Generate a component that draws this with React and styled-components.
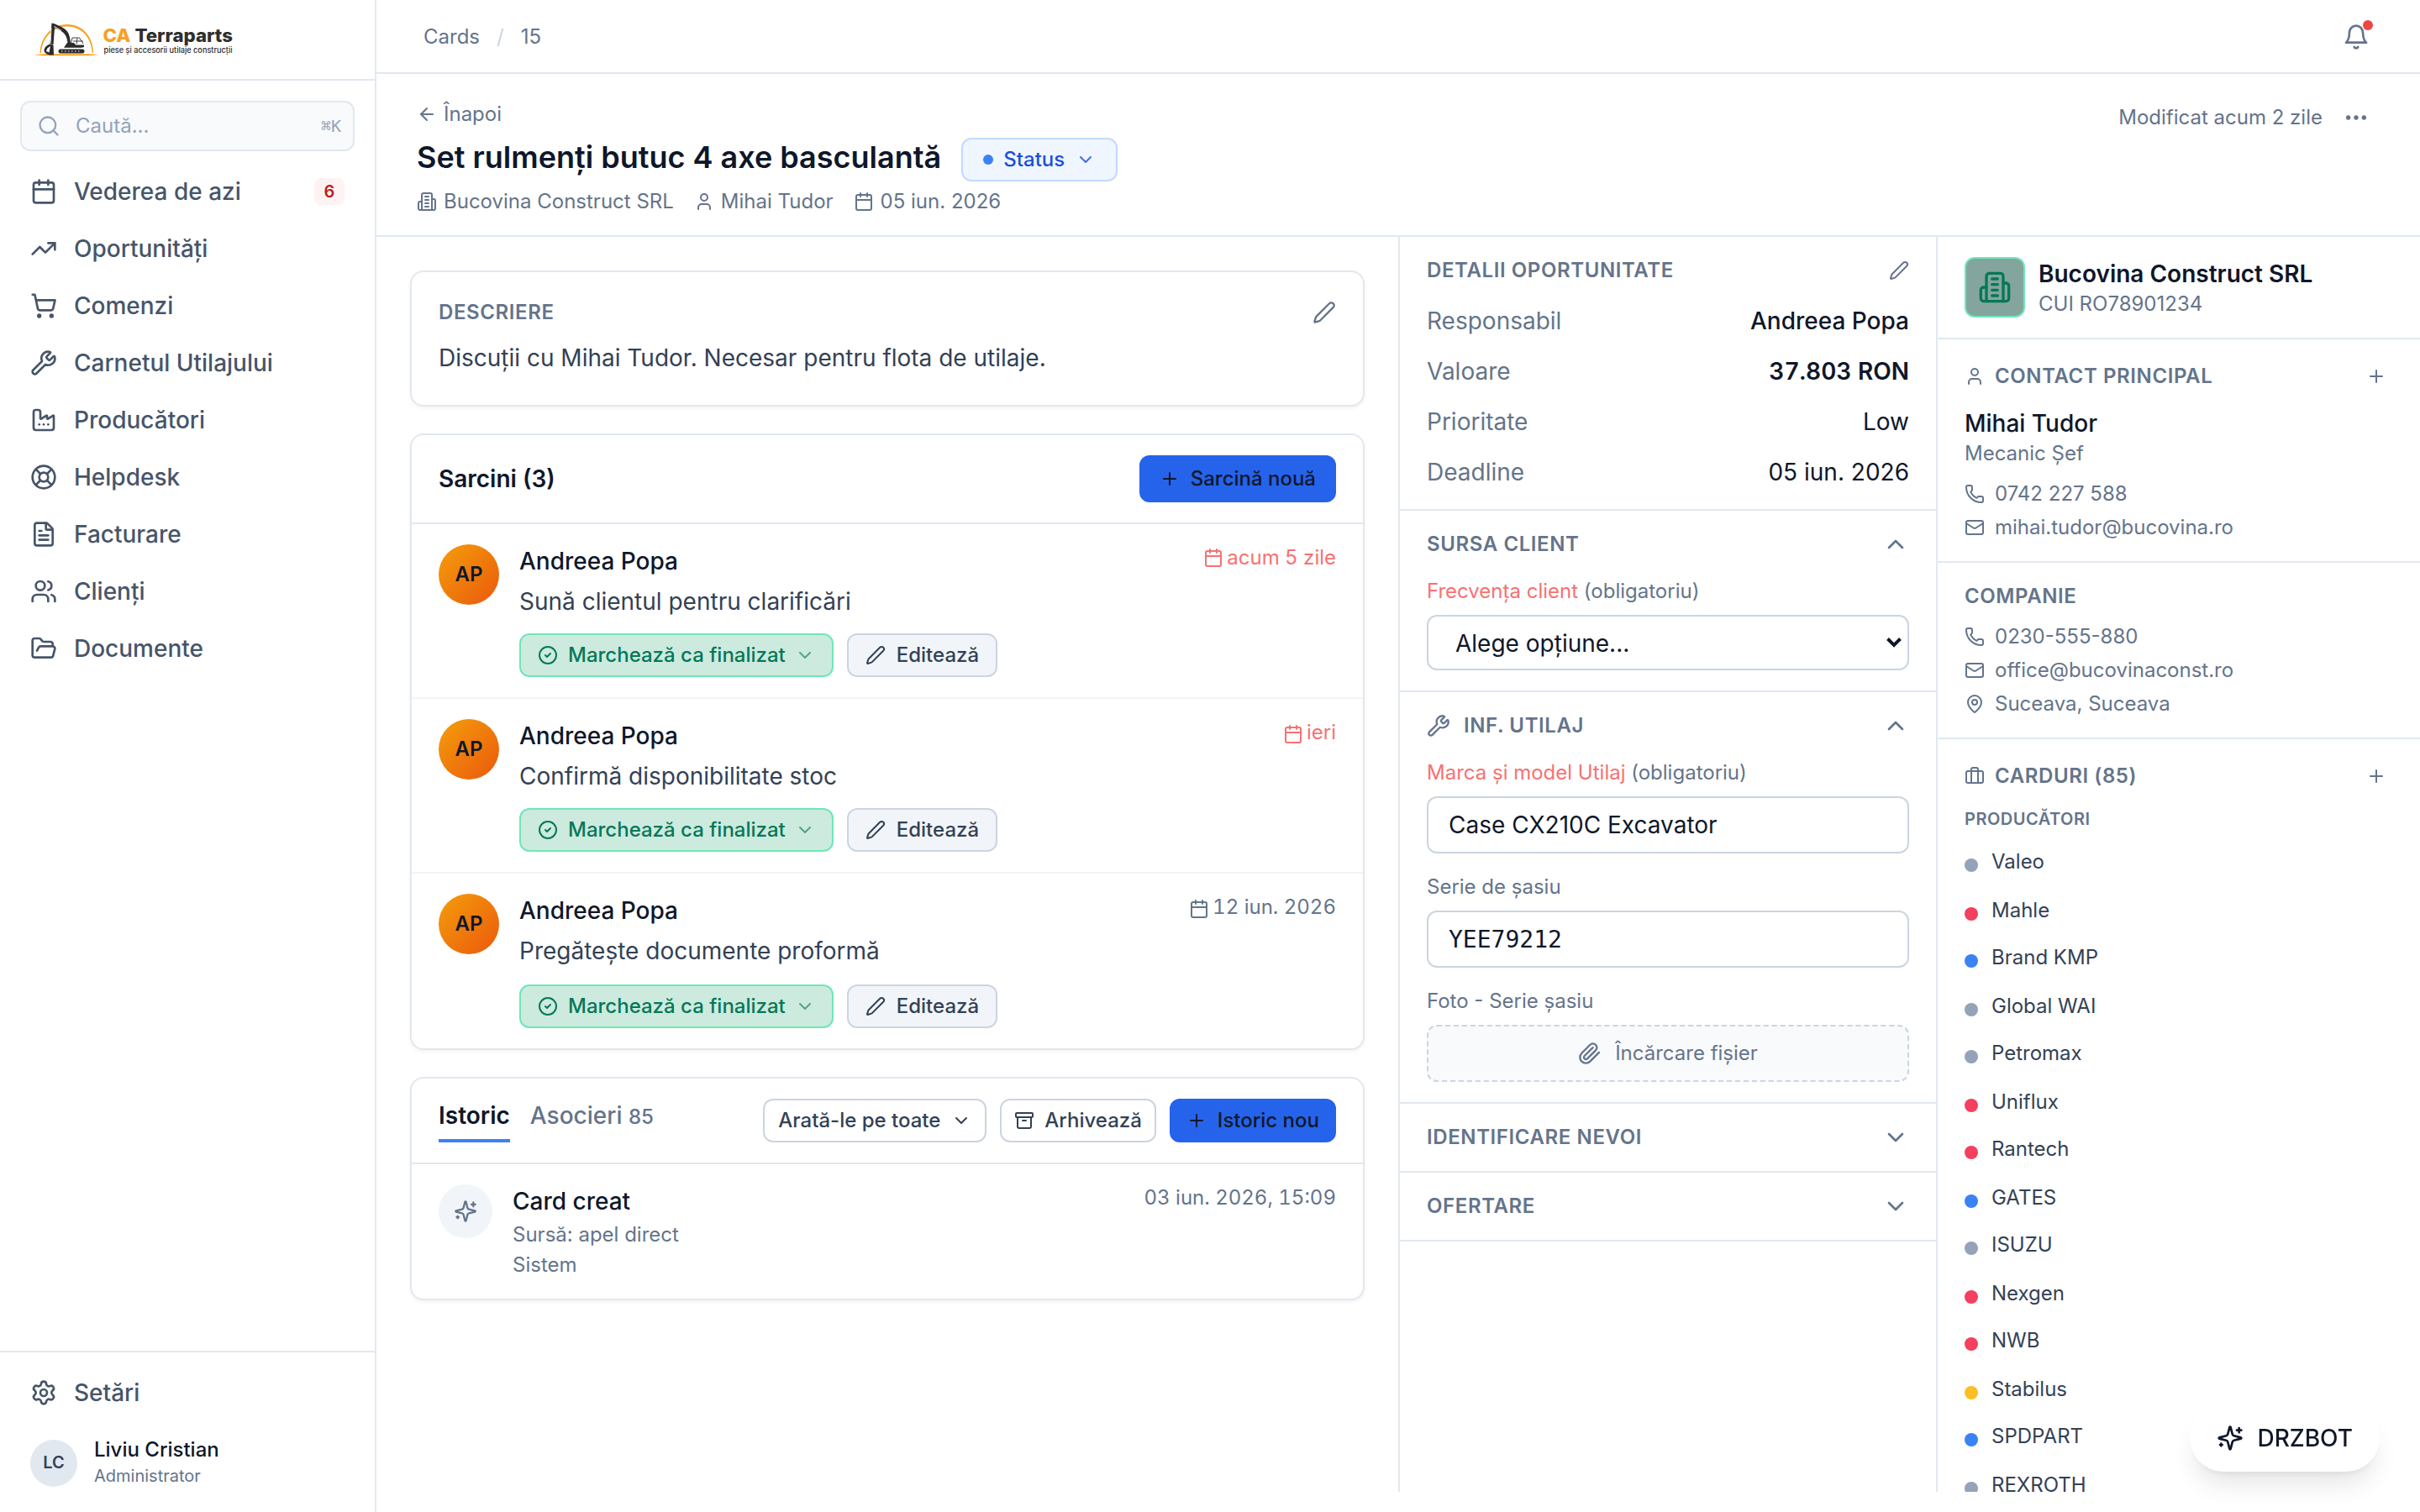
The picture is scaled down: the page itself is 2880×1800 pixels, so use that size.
import React from 'react'
import styled, { createGlobalStyle, css } from 'styled-components'
import {
  Archive,
  ArrowLeft,
  Briefcase,
  Calendar,
  ChevronDown,
  ChevronUp,
  CircleCheck,
  Ellipsis,
  Factory,
  FileText,
  FolderOpen,
  LifeBuoy,
  Mail,
  MapPin,
  Pen,
  Phone,
  Plus,
  Search,
  Settings,
  ShoppingCart,
  TrendingUp,
  User,
  Users,
  Wrench,
} from 'lucide-react'

const colors = {
  ink: '#0f172a',
  text: '#334155',
  nav: '#475569',
  muted: '#64748b',
  faint: '#94a3b8',
  line: '#e2e8f0',
  lineSoft: '#f1f5f9',
  lineStrong: '#cbd5e1',
  blue: '#2563eb',
  red: '#f87171',
  green: '#047857',
}

const GlobalStyle = createGlobalStyle`
  * {
    box-sizing: border-box;
  }
  body {
    margin: 0;
    background: #fff;
    color: ${colors.ink};
    font-family: Inter, 'Liberation Sans', sans-serif;
    font-size: 24px;
    line-height: 32px;
  }
  h1, h2, p {
    margin: 0;
  }
  button, input {
    font: inherit;
    color: inherit;
  }
  svg {
    display: block;
    flex-shrink: 0;
  }
`

/* icons that lucide draws differently in its current version */

const Glyph = ({ size = 24, children }) => (
  <svg
    width={size}
    height={size}
    viewBox="0 0 24 24"
    fill="none"
    stroke="currentColor"
    strokeWidth="2"
    strokeLinecap="round"
    strokeLinejoin="round"
  >
    {children}
  </svg>
)

const BellIcon = (props) => (
  <Glyph {...props}>
    <path d="M6 8a6 6 0 0 1 12 0c0 7 3 9 3 9H3s3-2 3-9" />
    <path d="M10.3 21a1.94 1.94 0 0 0 3.4 0" />
  </Glyph>
)

const BuildingIcon = (props) => (
  <Glyph {...props}>
    <path d="M6 22V4a2 2 0 0 1 2-2h8a2 2 0 0 1 2 2v18Z" />
    <path d="M6 12H4a2 2 0 0 0-2 2v6a2 2 0 0 0 2 2h2" />
    <path d="M18 9h2a2 2 0 0 1 2 2v9a2 2 0 0 1-2 2h-2" />
    <path d="M10 6h4M10 10h4M10 14h4M10 18h4" />
  </Glyph>
)

const SparklesIcon = (props) => (
  <Glyph {...props}>
    <path d="M9.937 15.5A2 2 0 0 0 8.5 14.063l-6.135-1.582a.5.5 0 0 1 0-.962L8.5 9.936A2 2 0 0 0 9.937 8.5l1.582-6.135a.5.5 0 0 1 .963 0L14.063 8.5A2 2 0 0 0 15.5 9.937l6.135 1.581a.5.5 0 0 1 0 .964L15.5 14.063a2 2 0 0 0-1.437 1.437l-1.582 6.135a.5.5 0 0 1-.963 0z" />
    <path d="M20 3v4M22 5h-4M4 17v2M5 18H3" />
  </Glyph>
)

const PaperclipIcon = (props) => (
  <Glyph {...props}>
    <path d="m21.44 11.05-9.19 9.19a6 6 0 0 1-8.49-8.49l8.57-8.57A4 4 0 1 1 18 8.84l-8.59 8.57a2 2 0 0 1-2.83-2.83l8.49-8.48" />
  </Glyph>
)

const Logo = () => (
  <svg width="260" height="56" viewBox="40 19 260 56">
    <path
      d="M47.5 63C48 45 61 29 80 29c18 0 31 14.500 31 34h-1.400C109 45 97 31.500 80 31.500 63 31.500 50 45 49 63z"
      fill="#f7a023"
    />
    <path d="M40 65.300 52 64.200h54l12 .9-12 1.100H52z" fill="#f7a023" />
    <path
      d="m61.500 27.500 2.500.5c7 3 13 5 16.500 10 2 3 3 8 3.500 13h-3.500c-.5-5-2-9-4.500-11.500-3-3-7-4.500-11-6.500l-1.500 20-4-1z"
      fill="#2b2b2b"
    />
    <path d="m64.500 31.500 8.500 5" stroke="#fff" strokeWidth="1" />
    <path d="M61 33.500 60.300 51" stroke="#fff" strokeWidth=".8" />
    <path
      d="M59.500 52.500c-4 1-7.500 5-7 8.500 1 2 3 3.500 6.500 4.500h5l-.5-12z"
      fill="#2b2b2b"
    />
    <path d="M55 61c.5-3 2.500-5 5-6l-1.500 7.500z" fill="#fff" />
    <path
      d="m84.500 52 1.500-7h8.500l4.500 7M92 45.500l-1 7M87 49h12"
      fill="none"
      stroke="#2b2b2b"
      strokeWidth=".9"
    />
    <path d="M80 51h8l2 2.500h10V56l-3 .8H76l2-3z" fill="#2b2b2b" />
    <rect x="69.500" y="58.500" width="31" height="5" rx="2.500" fill="#2b2b2b" />
    <path
      d="M73 61h24"
      stroke="#fff"
      strokeWidth="1.200"
      strokeDasharray="1.500 2.500"
    />
    <text
      x="122.500"
      y="49.500"
      fontFamily="Inter, sans-serif"
      fontSize="22"
      fontWeight="800"
      textLength="154.500"
      lengthAdjust="spacingAndGlyphs"
      fill="#2f2f2f"
    >
      <tspan fill="#f7a023">CA</tspan> Terraparts
    </text>
    <text
      x="123.500"
      y="63.300"
      fontFamily="Inter, sans-serif"
      fontSize="9.500"
      fontWeight="500"
      textLength="153"
      lengthAdjust="spacingAndGlyphs"
      fill="#2f2f2f"
    >
      piese și accesorii utilaje construcții
    </text>
  </svg>
)

/* shell */

const Shell = styled.div`
  display: grid;
  grid-template-columns: 448px 1fr;
  height: 1800px;
  overflow: hidden;
`

const Sidebar = styled.aside`
  display: flex;
  flex-direction: column;
  border-right: 2px solid ${colors.line};
`

const Brand = styled.div`
  height: 96px;
  padding: 19px 40px 0;
  border-bottom: 2px solid ${colors.line};
`

const SearchBox = styled.div`
  display: flex;
  align-items: center;
  gap: 18px;
  height: 60px;
  margin: 24px 24px 16px;
  padding: 0 14px 0 18px;
  border: 2px solid ${colors.line};
  border-radius: 12px;
  background: #f8fafc;
  color: ${colors.faint};
`

const Shortcut = styled.kbd`
  margin-left: auto;
  font-family: 'DejaVu Sans Mono', monospace;
  font-size: 20px;
`

const Nav = styled.nav`
  display: flex;
  flex-direction: column;
  gap: 4px;
  padding: 0 24px;
`

const NavItem = styled.a`
  display: flex;
  align-items: center;
  gap: 20px;
  height: 64px;
  padding: 0 12px;
  font-size: 28px;
  font-weight: 500;
  color: ${colors.nav};
`

const NavBadge = styled.span`
  display: flex;
  align-items: center;
  justify-content: center;
  width: 36px;
  height: 32px;
  margin-left: auto;
  border-radius: 8px;
  background: #fef2f2;
  color: #b91c1c;
  font-size: 20px;
  font-weight: 600;
`

const SidebarFooter = styled.div`
  height: 192px;
  margin-top: auto;
  padding: 16px 24px 0;
  border-top: 2px solid ${colors.line};
`

const UserRow = styled.div`
  display: flex;
  align-items: center;
  gap: 20px;
  margin-top: 20px;
  padding: 0 12px;
`

const UserAvatar = styled.div`
  display: flex;
  align-items: center;
  justify-content: center;
  width: 56px;
  height: 56px;
  padding-bottom: 2px;
  border-radius: 50%;
  background: ${colors.line};
  color: ${colors.text};
  font-size: 20px;
  font-weight: 600;
`

const UserName = styled.div`
  font-weight: 500;
`

const UserRole = styled.div`
  font-size: 20px;
  line-height: 31px;
  color: ${colors.muted};
`

const Page = styled.div`
  display: flex;
  flex-direction: column;
  min-width: 0;
  min-height: 0;
`

const TopBar = styled.div`
  display: flex;
  align-items: center;
  justify-content: space-between;
  height: 88px;
  padding: 2px 60px 0 56px;
  border-bottom: 2px solid ${colors.line};
  color: ${colors.muted};
`

const Crumbs = styled.div`
  display: flex;
  gap: 20px;
`

const CrumbSlash = styled.span`
  color: ${colors.lineStrong};
`

const BellButton = styled.div`
  position: relative;

  &::after {
    content: '';
    position: absolute;
    top: -4px;
    right: -4px;
    width: 12px;
    height: 12px;
    border-radius: 50%;
    background: #ef4444;
  }
`

const PageHeader = styled.header`
  display: flex;
  justify-content: space-between;
  height: 194px;
  padding: 32px 60px 0 48px;
  border-bottom: 2px solid ${colors.line};
  color: ${colors.muted};
`

const BackLink = styled.div`
  display: flex;
  align-items: center;
  gap: 8px;
`

const TitleRow = styled.div`
  display: flex;
  align-items: center;
  gap: 24px;
  margin-top: 12px;
`

const Title = styled.h1`
  padding-bottom: 6px;
  font-size: 36px;
  line-height: 44px;
  font-weight: 600;
  color: ${colors.ink};
`

const MetaRow = styled.div`
  display: flex;
  gap: 24px;
  margin-top: 8px;
`

const MetaItem = styled.span`
  display: flex;
  align-items: center;
  gap: 8px;
`

const Modified = styled.div`
  display: flex;
  align-items: center;
  gap: 24px;
  height: 40px;
`

/* buttons */

const variants = {
  primary: css`
    border-color: ${colors.blue};
    background: ${colors.blue};
    color: ${colors.ink};
  `,
  status: css`
    border-color: #bfdbfe;
    background: #eff6ff;
    color: #1d4ed8;
  `,
  success: css`
    border-color: #6ee7b7;
    background: #cdeadf;
    color: ${colors.green};
  `,
  soft: css`
    border-color: ${colors.lineStrong};
    background: ${colors.lineSoft};
    color: ${colors.text};
  `,
  outline: css`
    border-color: ${colors.lineStrong};
    background: #fff;
    color: ${colors.text};
  `,
}

const Button = styled.button`
  display: flex;
  align-items: center;
  gap: ${({ $gap }) => $gap || 12}px;
  height: ${({ $height }) => $height || 52}px;
  padding: 0 ${({ $pad }) => $pad || 20}px;
  border: 2px solid;
  border-radius: 12px;
  font-weight: 500;
  white-space: nowrap;
  ${({ $variant }) => variants[$variant]}
`

const StatusDot = styled.span`
  width: 12px;
  height: 12px;
  border-radius: 50%;
  background: #3b82f6;
`

const Dim = styled.span`
  margin-left: ${({ $shift }) => $shift}px;
  opacity: ${({ $to }) => $to};
`

/* main column */

const Columns = styled.div`
  display: grid;
  grid-template-columns: 1216px 640px 1fr;
  flex: 1;
  min-height: 0;
  margin-bottom: 24px;
`

const Feed = styled.main`
  display: flex;
  flex-direction: column;
  gap: 32px;
  padding: 40px;
`

const Card = styled.section`
  border: 2px solid ${colors.line};
  border-radius: 16px;
  background: #fff;
  box-shadow: 0 2px 4px rgba(0, 0, 0, 0.05);
`

const DescriptionCard = styled(Card)`
  height: 162px;
  padding: 32px;
`

const SectionHead = styled.div`
  display: flex;
  align-items: center;
  height: ${({ $height }) => $height || 32}px;
  gap: ${({ $gap }) => $gap || 12}px;
  color: ${colors.muted};

  > svg:last-child:not(:first-child) {
    margin-left: auto;
  }
`

const SectionTitle = styled.h2`
  font-size: ${({ $small }) => ($small ? 20 : 24)}px;
  line-height: ${({ $small }) => ($small ? 28 : 32)}px;
  font-weight: 600;
  letter-spacing: 0.025em;
  text-transform: uppercase;
  color: ${colors.muted};
`

const Description = styled.p`
  margin-top: 18px;
  font-size: 28px;
  line-height: 40px;
  color: ${colors.text};
`

const CardHeader = styled.div`
  display: flex;
  align-items: center;
  justify-content: space-between;
  height: ${({ $height }) => $height}px;
  padding: 0 32px;
  border-bottom: 2px solid ${colors.line};
`

const CardTitle = styled.h2`
  font-size: 28px;
  font-weight: 600;
`

const TaskAvatar = styled.div`
  display: flex;
  align-items: center;
  justify-content: center;
  width: 72px;
  height: 72px;
  border-radius: 50%;
  background: linear-gradient(135deg, #f59e0b, #ea580c);
  font-size: 24px;
  font-weight: 600;
`

const TaskBody = styled.div`
  flex: 1;
`

const TaskOwner = styled.div`
  font-size: 28px;
  line-height: 40px;
  font-weight: 500;
`

const TaskText = styled.div`
  margin-top: 8px;
  font-size: 28px;
  line-height: 40px;
  color: ${colors.text};
`

const ButtonRow = styled.div`
  display: flex;
  gap: 16px;
`

const TaskActions = styled(ButtonRow)`
  margin-top: 18px;
`

const TaskRow = styled.div`
  display: flex;
  align-items: flex-start;
  gap: 24px;
  height: 208px;
  padding: 24px 32px 0;

  & + & {
    border-top: 2px solid ${colors.lineSoft};
    margin-top: -2px;
    height: 210px;
  }

  &:last-child {
    height: 210px;

    ${TaskActions} {
      margin-top: 20px;
    }
  }
`

const DueDate = styled.div`
  display: flex;
  align-items: flex-start;
  gap: 4px;
  font-variant-numeric: tabular-nums;
  color: ${({ $late }) => ($late ? colors.red : colors.muted)};

  svg {
    margin-top: ${({ $drop }) => 4 + $drop}px;
  }
`

const Tabs = styled.div`
  display: flex;
  gap: 24px;
  height: 52px;
`

const Tab = styled.div`
  height: 52px;
  padding-top: 4px;
  border-bottom: 4px solid ${({ $active }) => ($active ? '#3b82f6' : 'transparent')};
  font-size: 28px;
  font-weight: ${({ $active }) => ($active ? 600 : 500)};
  color: ${({ $active }) => ($active ? colors.ink : colors.muted)};
`

const TabCount = styled.span`
  font-size: 24px;
`

const Entry = styled.div`
  display: flex;
  align-items: flex-start;
  gap: 24px;
  height: 160px;
  padding: 24px 32px 0;
  color: ${colors.muted};
`

const EntryIcon = styled.div`
  display: flex;
  align-items: center;
  justify-content: center;
  width: 64px;
  height: 64px;
  border-radius: 50%;
  background: ${colors.lineSoft};
`

const EntryBody = styled.div`
  flex: 1;
  line-height: 36px;
`

const EntryTitle = styled.div`
  margin-bottom: 2px;
  font-size: 28px;
  line-height: 40px;
  font-weight: 500;
  color: ${colors.ink};
`

const EntryDate = styled.span`
  font-variant-numeric: tabular-nums;
`

/* details column */

const Panel = styled.aside`
  min-height: 0;
  overflow: hidden;
  border-left: 2px solid ${colors.line};
`

const PanelSection = styled.section`
  padding: ${({ $pad }) => $pad};
  border-bottom: 2px solid ${colors.line};
`

const DetailList = styled.div`
  margin-top: 14px;
`

const DetailRow = styled.div`
  display: flex;
  align-items: center;
  justify-content: space-between;
  height: 60px;
  font-size: 28px;
`

const DetailLabel = styled.span`
  color: ${colors.muted};
`

const DetailValue = styled.span`
  font-weight: ${({ $weight }) => $weight || 400};
  font-variant-numeric: ${({ $tabular }) => ($tabular ? 'tabular-nums' : 'normal')};
`

const FieldLabel = styled.div`
  margin-bottom: 12px;
  color: ${colors.muted};

  * + & {
    margin-top: 24px;
  }

  ${SectionHead} + & {
    margin-top: 0;
  }
`

const Required = styled.span`
  color: ${colors.red};
`

const SelectField = styled.div`
  display: flex;
  align-items: center;
  justify-content: space-between;
  height: 66px;
  padding: 2px 6px 0 32px;
  border: 2px solid ${colors.lineStrong};
  border-radius: 12px;
  font-size: 28px;

  svg {
    margin-bottom: 3px;
  }
`

const Input = styled.input`
  display: block;
  width: 100%;
  height: 68px;
  padding: 0 24px;
  border: 2px solid ${colors.lineStrong};
  border-radius: 12px;
  outline: none;
  font-size: 28px;
  ${({ $mono }) => $mono && "font-family: 'DejaVu Sans Mono', monospace;"}
`

const Upload = styled.div`
  display: flex;
  align-items: center;
  justify-content: center;
  gap: 16px;
  height: 68px;
  border: 2px dashed ${colors.lineStrong};
  border-radius: 12px;
  background: #f8fafc;
  color: ${colors.muted};
`

/* company column */

const CompanyHead = styled.div`
  display: flex;
  gap: 16px;
`

const CompanyLogo = styled.div`
  display: flex;
  align-items: center;
  justify-content: center;
  width: 72px;
  height: 72px;
  border: 2px solid #6ee7b7;
  border-radius: 12px;
  background: #84a59d;
  color: ${colors.green};
`

const CompanyName = styled.div`
  font-size: 28px;
  line-height: 40px;
  font-weight: 600;
`

const Muted = styled.div`
  color: ${colors.muted};
`

const PersonName = styled.div`
  margin-top: 12px;
  font-size: 28px;
  line-height: 40px;
  font-weight: 500;
`

const ContactList = styled.div`
  margin-top: ${({ $top }) => $top}px;
`

const ContactLine = styled.div`
  display: flex;
  align-items: center;
  gap: 12px;
  height: 40px;
  color: ${colors.muted};
`

const CardsSection = styled.section`
  padding: 20px 40px 0 32px;
`

const CardsSubhead = styled.div`
  margin: 13px 0 21px;
`

const MakerRow = styled.div`
  display: flex;
  align-items: flex-start;
  gap: 16px;
  height: 58px;
  color: ${colors.text};

  &:nth-child(even) {
    height: 56px;
  }
`

const MakerDot = styled.span`
  width: 16px;
  height: 16px;
  margin-top: 12px;
  border-radius: 50%;
  background: ${({ $color }) => $color};
`

const BotButton = styled.button`
  position: fixed;
  right: 48px;
  bottom: 48px;
  display: flex;
  align-items: center;
  gap: 16px;
  height: 80px;
  padding: 0 32px;
  border: 0;
  border-radius: 40px;
  background: #fff;
  box-shadow: 0 20px 30px -6px rgba(0, 0, 0, 0.1),
    0 8px 12px -8px rgba(0, 0, 0, 0.1);
  font-size: 28px;
  font-weight: 500;
`

const navItems = [
  { label: 'Vederea de azi', icon: Calendar, badge: 6 },
  { label: 'Oportunități', icon: TrendingUp },
  { label: 'Comenzi', icon: ShoppingCart },
  { label: 'Carnetul Utilajului', icon: Wrench },
  { label: 'Producători', icon: Factory },
  { label: 'Helpdesk', icon: LifeBuoy },
  { label: 'Facturare', icon: FileText },
  { label: 'Clienți', icon: Users },
  { label: 'Documente', icon: FolderOpen },
]

const tasks = [
  { text: 'Sună clientul pentru clarificări', due: 'acum 5 zile', late: true, drop: 0 },
  { text: 'Confirmă disponibilitate stoc', due: 'ieri', late: true, drop: 2 },
  { text: 'Pregătește documente proformă', due: '12 iun. 2026', late: false, drop: 2 },
]

const details = [
  { label: 'Responsabil', value: 'Andreea Popa', weight: 500 },
  { label: 'Valoare', value: '37.803 RON', weight: 600, tabular: true },
  { label: 'Prioritate', value: 'Low' },
  { label: 'Deadline', value: '05 iun. 2026' },
]

const gray = '#94a3b8'
const rose = '#f43f5e'
const sky = '#3b82f6'
const amber = '#fbbf24'

const makers = [
  ['Valeo', gray],
  ['Mahle', rose],
  ['Brand KMP', sky],
  ['Global WAI', gray],
  ['Petromax', gray],
  ['Uniflux', rose],
  ['Rantech', rose],
  ['GATES', sky],
  ['ISUZU', gray],
  ['Nexgen', rose],
  ['NWB', rose],
  ['Stabilus', amber],
  ['SPDPART', sky],
  ['REXROTH', gray],
]

function SidebarNav() {
  return (
    <Sidebar>
      <Brand>
        <Logo />
      </Brand>
      <SearchBox>
        <Search size={28} />
        <span>Caută...</span>
        <Shortcut>⌘K</Shortcut>
      </SearchBox>
      <Nav>
        {navItems.map(({ label, icon: Icon, badge }) => (
          <NavItem key={label}>
            <Icon size={32} />
            {label}
            {badge && <NavBadge>{badge}</NavBadge>}
          </NavItem>
        ))}
      </Nav>
      <SidebarFooter>
        <NavItem>
          <Settings size={32} />
          Setări
        </NavItem>
        <UserRow>
          <UserAvatar>LC</UserAvatar>
          <div>
            <UserName>Liviu Cristian</UserName>
            <UserRole>Administrator</UserRole>
          </div>
        </UserRow>
      </SidebarFooter>
    </Sidebar>
  )
}

function Task({ text, due, late, drop }) {
  return (
    <TaskRow>
      <TaskAvatar>AP</TaskAvatar>
      <TaskBody>
        <TaskOwner>Andreea Popa</TaskOwner>
        <TaskText>{text}</TaskText>
        <TaskActions>
          <Button $variant="success">
            <CircleCheck size={24} />
            Marchează ca finalizat
            <Dim $to={0.6} $shift={-1}>
              <ChevronDown size={24} />
            </Dim>
          </Button>
          <Button $variant="soft" $gap={13}>
            <Pen size={24} />
            Editează
          </Button>
        </TaskActions>
      </TaskBody>
      <DueDate $late={late} $drop={drop}>
        <Calendar size={24} />
        {due}
      </DueDate>
    </TaskRow>
  )
}

function DetailsPanel() {
  return (
    <Panel>
      <PanelSection $pad="24px 32px 14px">
        <SectionHead>
          <SectionTitle>Detalii oportunitate</SectionTitle>
          <Pen size={24} />
        </SectionHead>
        <DetailList>
          {details.map(({ label, value, weight, tabular }) => (
            <DetailRow key={label}>
              <DetailLabel>{label}</DetailLabel>
              <DetailValue $weight={weight} $tabular={tabular}>
                {value}
              </DetailValue>
            </DetailRow>
          ))}
        </DetailList>
      </PanelSection>
      <PanelSection $pad="0 32px 24px">
        <SectionHead $height={80}>
          <SectionTitle>Sursa client</SectionTitle>
          <ChevronUp size={32} />
        </SectionHead>
        <FieldLabel>
          <Required>Frecvența client</Required> (obligatoriu)
        </FieldLabel>
        <SelectField>
          Alege opțiune...
          <svg width="20" height="14" viewBox="0 0 20 14" fill="none">
            <path d="m2.500 2.500 7.500 7.500 7.500-7.500" stroke={colors.ink} strokeWidth="4" />
          </svg>
        </SelectField>
      </PanelSection>
      <PanelSection $pad="0 32px 24px">
        <SectionHead $height={80} $gap={16}>
          <Wrench size={28} />
          <SectionTitle>Inf. utilaj</SectionTitle>
          <ChevronUp size={32} />
        </SectionHead>
        <FieldLabel>
          <Required>Marca și model Utilaj</Required> (obligatoriu)
        </FieldLabel>
        <Input defaultValue="Case CX210C Excavator" />
        <FieldLabel>Serie de șasiu</FieldLabel>
        <Input $mono defaultValue="YEE79212" />
        <FieldLabel>Foto - Serie șasiu</FieldLabel>
        <Upload>
          <PaperclipIcon size={28} />
          Încărcare fișier
        </Upload>
      </PanelSection>
      <PanelSection $pad="0 32px">
        <SectionHead $height={80}>
          <SectionTitle>Identificare nevoi</SectionTitle>
          <ChevronDown size={32} />
        </SectionHead>
      </PanelSection>
      <PanelSection $pad="0 32px">
        <SectionHead $height={80}>
          <SectionTitle>Ofertare</SectionTitle>
          <ChevronDown size={32} />
        </SectionHead>
      </PanelSection>
    </Panel>
  )
}

function CompanyPanel() {
  return (
    <Panel>
      <PanelSection $pad="24px 32px">
        <CompanyHead>
          <CompanyLogo>
            <BuildingIcon size={40} />
          </CompanyLogo>
          <div>
            <CompanyName>Bucovina Construct SRL</CompanyName>
            <Muted>CUI RO78901234</Muted>
          </div>
        </CompanyHead>
      </PanelSection>
      <PanelSection $pad="20px 40px 20px 32px">
        <SectionHead $height={48}>
          <User size={24} />
          <SectionTitle>Contact principal</SectionTitle>
          <Plus size={24} />
        </SectionHead>
        <PersonName>Mihai Tudor</PersonName>
        <Muted>Mecanic Șef</Muted>
        <ContactList $top={12}>
          <ContactLine>
            <Phone size={24} />
            0742 227 588
          </ContactLine>
          <ContactLine>
            <Mail size={24} />
            mihai.tudor@bucovina.ro
          </ContactLine>
        </ContactList>
      </PanelSection>
      <PanelSection $pad="20px 40px 20px 32px">
        <SectionHead $height={40}>
          <SectionTitle>Companie</SectionTitle>
        </SectionHead>
        <ContactList $top={8}>
          <ContactLine>
            <Phone size={24} />
            0230-555-880
          </ContactLine>
          <ContactLine>
            <Mail size={24} />
            office@bucovinaconst.ro
          </ContactLine>
          <ContactLine>
            <MapPin size={24} />
            Suceava, Suceava
          </ContactLine>
        </ContactList>
      </PanelSection>
      <CardsSection>
        <SectionHead $height={48}>
          <Briefcase size={24} />
          <SectionTitle>Carduri (85)</SectionTitle>
          <Plus size={24} />
        </SectionHead>
        <CardsSubhead>
          <SectionTitle $small>Producători</SectionTitle>
        </CardsSubhead>
        <div>
          {makers.map(([name, color]) => (
            <MakerRow key={name}>
              <MakerDot $color={color} />
              {name}
            </MakerRow>
          ))}
        </div>
      </CardsSection>
    </Panel>
  )
}

function App() {
  return (
    <>
      <GlobalStyle />
      <Shell>
        <SidebarNav />
        <Page>
          <TopBar>
            <Crumbs>
              <span>Cards</span>
              <CrumbSlash>/</CrumbSlash>
              <span>15</span>
            </Crumbs>
            <BellButton>
              <BellIcon size={32} />
            </BellButton>
          </TopBar>
          <PageHeader>
            <div>
              <BackLink>
                <ArrowLeft size={24} />
                Înapoi
              </BackLink>
              <TitleRow>
                <Title>Set rulmenți butuc 4 axe basculantă</Title>
                <Button $variant="status" $pad={24}>
                  <StatusDot />
                  Status
                  <Dim $to={0.8} $shift={1}>
                    <ChevronDown size={24} />
                  </Dim>
                </Button>
              </TitleRow>
              <MetaRow>
                <MetaItem>
                  <BuildingIcon size={24} />
                  Bucovina Construct SRL
                </MetaItem>
                <MetaItem>
                  <User size={24} />
                  Mihai Tudor
                </MetaItem>
                <MetaItem>
                  <Calendar size={24} />
                  05 iun. 2026
                </MetaItem>
              </MetaRow>
            </div>
            <Modified>
              Modificat acum 2 zile
              <Ellipsis size={32} />
            </Modified>
          </PageHeader>
          <Columns>
            <Feed>
              <DescriptionCard>
                <SectionHead>
                  <SectionTitle>Descriere</SectionTitle>
                  <Pen size={28} />
                </SectionHead>
                <Description>
                  Discuții cu Mihai Tudor. Necesar pentru flota de utilaje.
                </Description>
              </DescriptionCard>
              <Card>
                <CardHeader $height={106}>
                  <CardTitle>Sarcini (3)</CardTitle>
                  <Button $variant="primary" $height={56} $pad={22} $gap={13}>
                    <Plus size={24} />
                    Sarcină nouă
                  </Button>
                </CardHeader>
                {tasks.map((task) => (
                  <Task key={task.text} {...task} />
                ))}
              </Card>
              <Card>
                <CardHeader $height={102}>
                  <Tabs>
                    <Tab $active>Istoric</Tab>
                    <Tab>
                      Asocieri <TabCount>85</TabCount>
                    </Tab>
                  </Tabs>
                  <ButtonRow>
                    <Button $variant="outline" $pad={16} $gap={13}>
                      Arată-le pe toate
                      <ChevronDown size={24} />
                    </Button>
                    <Button $variant="outline" $pad={15} $gap={12}>
                      <Archive size={24} />
                      Arhivează
                    </Button>
                    <Button $variant="primary" $pad={18} $gap={13}>
                      <Plus size={24} />
                      Istoric nou
                    </Button>
                  </ButtonRow>
                </CardHeader>
                <Entry>
                  <EntryIcon>
                    <SparklesIcon size={28} />
                  </EntryIcon>
                  <EntryBody>
                    <EntryTitle>Card creat</EntryTitle>
                    <div>Sursă: apel direct</div>
                    <div>Sistem</div>
                  </EntryBody>
                  <EntryDate>03 iun. 2026, 15:09</EntryDate>
                </Entry>
              </Card>
            </Feed>
            <DetailsPanel />
            <CompanyPanel />
          </Columns>
        </Page>
      </Shell>
      <BotButton>
        <SparklesIcon size={32} />
        DRZBOT
      </BotButton>
    </>
  )
}

export default App
